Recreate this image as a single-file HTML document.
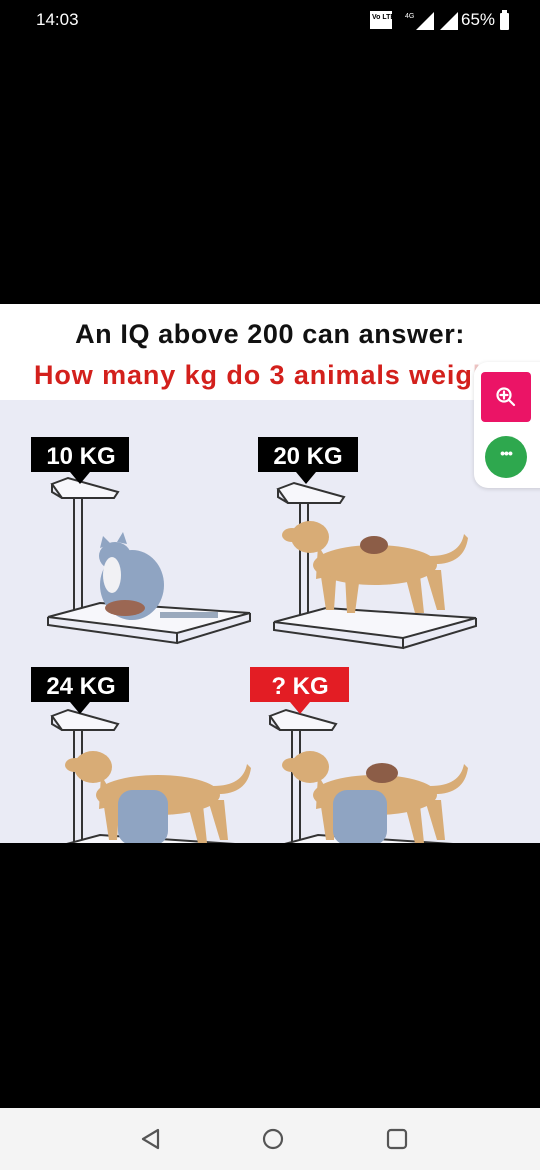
<!DOCTYPE html>
<html><head><meta charset="utf-8"><style>
html,body{margin:0;padding:0;background:#000;width:540px;height:1170px;overflow:hidden;font-family:"Liberation Sans",sans-serif;}
.abs{position:absolute;}
</style></head><body>
<div class="abs" style="left:0;top:304px;width:540px;height:96px;background:#fff"></div>
<div class="abs" style="left:0;top:400px;width:540px;height:443px;background:#eaebf5"></div>
<div class="abs" style="left:0;top:319px;width:540px;text-align:center;font-weight:bold;font-size:27px;letter-spacing:0.6px;color:#111">An IQ above 200 can answer:</div>
<div class="abs" style="left:34px;top:360px;font-weight:bold;font-size:27px;letter-spacing:0.9px;color:#d3201c;white-space:nowrap">How many kg do 3 animals weig<span style="color:#f1c7c6">h?</span></div>
<div class="abs" style="left:474px;top:362px;width:80px;height:126px;background:#fff;border-radius:14px 0 0 14px;box-shadow:0 1px 4px rgba(0,0,0,.15)"></div>
<div class="abs" style="left:481px;top:372px;width:50px;height:50px;background:#eb1466;border-radius:4px"></div>
<svg class="abs" style="left:481px;top:372px" width="50" height="50"><circle cx="23" cy="23" r="6.5" fill="none" stroke="#fff" stroke-width="2.2"/><path d="M23 19.5v7M19.5 23h7M28 28l5 5" stroke="#fff" stroke-width="2.2" stroke-linecap="round"/></svg>
<div class="abs" style="left:485px;top:436px;width:42px;height:42px;background:#2ea84e;border-radius:50%"></div>
<div class="abs" style="left:485px;top:445px;width:42px;text-align:center;color:#fff;font-size:14px;font-weight:bold;letter-spacing:-1px">•••</div>

<svg class="abs" style="left:0;top:0" width="540" height="843">
<defs>
<g id="scale" fill="#f7f7fb" stroke="#333" stroke-width="2">
<path d="M74 498v118M82 498v118" fill="none"/>
<path d="M52 484l16 -6 50 14 -4 6 -52 0z"/>
<path d="M52 484v8l10 6" fill="none"/>
<path d="M48 617l52 -14 150 10 -73 20z"/>
<path d="M48 617v8l129 18v-10M177 643l73 -22v-8" fill="none"/>
</g>
</defs>
<use href="#scale"/>
<use href="#scale" transform="translate(226,5)"/>
<g transform="translate(0,232)"><use href="#scale"/></g>
<g transform="translate(218,232)"><use href="#scale"/></g>
<rect x="31" y="437" width="98" height="35" fill="#000"/><path d="M70 472h20l-10 12z" fill="#000"/>
<rect x="258" y="437" width="100" height="35" fill="#000"/><path d="M296 472h20l-10 12z" fill="#000"/>
<rect x="31" y="667" width="98" height="35" fill="#000"/><path d="M70 702h20l-10 12z" fill="#000"/>
<rect x="250" y="667" width="99" height="35" fill="#e31d24"/><path d="M290 702h20l-10 12z" fill="#e31d24"/>
<g font-family="Liberation Sans" font-weight="bold" font-size="24" fill="#fff" text-anchor="middle">
<text x="81" y="464">10 KG</text><text x="308" y="464">20 KG</text>
<text x="81" y="694">24 KG</text><text x="300" y="694">? KG</text></g>
<g fill="#8fa4c2"><ellipse cx="132" cy="585" rx="32" ry="35"/><ellipse cx="115" cy="556" rx="16" ry="14"/><path d="M100 548l3 -12 8 8zM117 542l6 -10 4 12z"/><path d="M160 612h58v6h-58z" fill="#9aa9bd"/></g>
<ellipse cx="112" cy="575" rx="9" ry="18" fill="#f1f1f4"/>
<ellipse cx="125" cy="608" rx="20" ry="8" fill="#9b6753"/>
<g id="dog" fill="#d8ac76">
<ellipse cx="375" cy="565" rx="62" ry="20"/>
<ellipse cx="310" cy="537" rx="19" ry="16"/><ellipse cx="292" cy="535" rx="10" ry="7"/>
<path d="M318 545l18 30 -20 4z"/>
<path d="M320 570l6 40h8l2-30zM345 575l2 38h8l4-30zM405 575l10 38h9l-4-38zM425 570l12 40h8l-4-40z"/>
<path d="M430 556q30 0 34 -22l4 4q-4 28 -38 26z"/>
</g>
<ellipse cx="374" cy="545" rx="14" ry="9" fill="#8c5d47"/>
<use href="#dog" transform="translate(-217,230)"/>
<use href="#dog" transform="translate(0,230)"/>
<ellipse cx="382" cy="773" rx="16" ry="10" fill="#8c5d47"/>
<g fill="#8fa4c2"><rect x="118" y="790" width="50" height="55" rx="14"/><rect x="333" y="790" width="54" height="55" rx="14"/></g>
</svg>

<div class="abs" style="left:36px;top:10px;color:#fff;font-size:17px">14:03</div>
<svg class="abs" style="left:368px;top:8px" width="150" height="26">
<rect x="2" y="3" width="22" height="18" fill="#fff"/><text x="4" y="11" font-size="7" font-family="Liberation Sans" font-weight="bold">Vo LTE</text>
<path d="M48 22L66 4v18z" fill="#fff"/><text x="37" y="10" font-size="7" fill="#fff" font-family="Liberation Sans">4G</text>
<path d="M72 22L90 4v18z" fill="#fff"/>
<rect x="132" y="5" width="9" height="17" rx="1" fill="#fff"/><rect x="134" y="2" width="5" height="3" fill="#fff"/>
</svg>
<div class="abs" style="left:461px;top:10px;color:#fff;font-size:17px">65%</div>

<div class="abs" style="left:0;top:1108px;width:540px;height:62px;background:#f4f4f4"></div>
<svg class="abs" style="left:0;top:1108px" width="540" height="62">
<path d="M158 22l-15 9 15 9z" fill="none" stroke="#555" stroke-width="2.2" stroke-linejoin="round"/>
<circle cx="273" cy="31" r="9" fill="none" stroke="#555" stroke-width="2.2"/>
<rect x="388" y="22" width="18" height="18" rx="3" fill="none" stroke="#555" stroke-width="2.2"/>
</svg>
</body></html>
